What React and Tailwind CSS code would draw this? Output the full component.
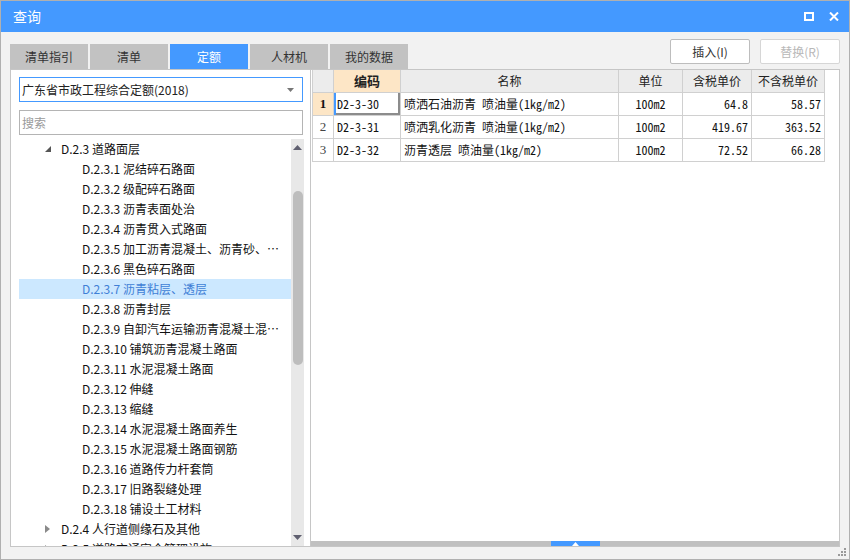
import React from 'react';

const TABS = ['清单指引', '清单', '定额', '人材机', '我的数据'];
const ACTIVE_TAB = 2;

const TREE = [
  { level: 2, label: 'D.2.3 道路面层', toggle: 'open' },
  { level: 3, label: 'D.2.3.1 泥结碎石路面' },
  { level: 3, label: 'D.2.3.2 级配碎石路面' },
  { level: 3, label: 'D.2.3.3 沥青表面处治' },
  { level: 3, label: 'D.2.3.4 沥青贯入式路面' },
  { level: 3, label: 'D.2.3.5 加工沥青混凝土、沥青砂、沥青混合料' },
  { level: 3, label: 'D.2.3.6 黑色碎石路面' },
  { level: 3, label: 'D.2.3.7 沥青粘层、透层', selected: true },
  { level: 3, label: 'D.2.3.8 沥青封层' },
  { level: 3, label: 'D.2.3.9 自卸汽车运输沥青混凝土混合料' },
  { level: 3, label: 'D.2.3.10 铺筑沥青混凝土路面' },
  { level: 3, label: 'D.2.3.11 水泥混凝土路面' },
  { level: 3, label: 'D.2.3.12 伸缝' },
  { level: 3, label: 'D.2.3.13 缩缝' },
  { level: 3, label: 'D.2.3.14 水泥混凝土路面养生' },
  { level: 3, label: 'D.2.3.15 水泥混凝土路面钢筋' },
  { level: 3, label: 'D.2.3.16 道路传力杆套筒' },
  { level: 3, label: 'D.2.3.17 旧路裂缝处理' },
  { level: 3, label: 'D.2.3.18 铺设土工材料' },
  { level: 2, label: 'D.2.4 人行道侧缘石及其他', toggle: 'closed' },
  { level: 2, label: 'D.2.5 道路交通安全管理设施', toggle: 'closed' },
];

const ROWS = [
  { code: 'D2-3-30', name: '喷洒石油沥青 喷油量(1kg/m2)', unit: '100m2', taxed: '64.8', untaxed: '58.57' },
  { code: 'D2-3-31', name: '喷洒乳化沥青 喷油量(1kg/m2)', unit: '100m2', taxed: '419.67', untaxed: '363.52' },
  { code: 'D2-3-32', name: '沥青透层 喷油量(1kg/m2)', unit: '100m2', taxed: '72.52', untaxed: '66.28' },
];

const TitleBar = () => (
  <div className="h-[31px] bg-[#4499ff] flex items-center justify-between pl-[12px] pr-[10px] text-white">
    <span className="text-[14px]">查询</span>
    <div className="flex items-center gap-[15px]">
      <svg width="10" height="9" viewBox="0 0 10 9">
        <rect x="1" y="1" width="8" height="7" fill="none" stroke="#fff" strokeWidth="2" />
      </svg>
      <svg width="10" height="9" viewBox="0 0 10 9">
        <path d="M1 0.5 L9 8.5 M9 0.5 L1 8.5" stroke="#fff" strokeWidth="2" />
      </svg>
    </div>
  </div>
);

const TabBar = () => (
  <div className="h-[37px] flex justify-between px-[9px]">
    <div className="flex items-end gap-[2px]">
      {TABS.map((tab, i) => (
        <div
          key={tab}
          className={
            i === ACTIVE_TAB
              ? 'w-[78px] h-[25px] flex items-center justify-center text-[12px] bg-[#4499ff] text-white'
              : 'w-[78px] h-[25px] flex items-center justify-center text-[12px] bg-[#c2c2c2] text-[#333]'
          }
        >
          {tab}
        </div>
      ))}
    </div>
    <div className="flex gap-[10px] pt-[7px]">
      <button
        type="button"
        className="w-[80px] h-[25px] bg-white border border-[#bdbdbd] rounded-[2px] text-[12px] text-[#333]"
      >
        插入(I)
      </button>
      <button
        type="button"
        className="w-[80px] h-[25px] bg-white border border-[#d6d6d6] rounded-[2px] text-[12px] text-[#b8b8b8]"
      >
        替换(R)
      </button>
    </div>
  </div>
);

const TreeRow = ({ item }) => {
  const indent = item.level === 2 ? 'pl-[26px]' : 'pl-[63px]';
  return (
    <div
      className={`h-[20px] flex items-center ${indent} ${item.selected ? 'bg-[#cce8ff] text-[#3f7fd6]' : 'text-[#111]'}`}
    >
      {item.toggle && (
        <span className="w-[16px] flex items-center">
          {item.toggle === 'open' ? (
            <svg width="6" height="6" viewBox="0 0 6 6">
              <path d="M6 0 L6 6 L0 6 Z" fill="#555" />
            </svg>
          ) : (
            <svg width="5" height="8" viewBox="0 0 5 8">
              <path d="M0 0 L5 4 L0 8 Z" fill="#8a8a8a" />
            </svg>
          )}
        </span>
      )}
      <span className="truncate pr-[8px] text-[12px] leading-[20px]">{item.label}</span>
    </div>
  );
};

const VScrollbar = () => (
  <div className="w-[13px] bg-[#e8e8e8] flex flex-col items-center">
    <div className="h-[11px] flex items-end justify-center">
      <svg width="9" height="5" viewBox="0 0 9 5">
        <path d="M4.5 0 L9 5 L0 5 Z" fill="#606070" />
      </svg>
    </div>
    <div className="mt-[41px] w-[10px] h-[174px] rounded-full bg-[#bdbdbd]" />
    <div className="flex-1" />
    <div className="h-[11px] flex items-start justify-center">
      <svg width="9" height="5" viewBox="0 0 9 5">
        <path d="M0 0 L9 0 L4.5 5 Z" fill="#606070" />
      </svg>
    </div>
  </div>
);

const LeftPanel = () => (
  <div className="w-[301px] bg-white border border-[#c6c6c6] flex flex-col pt-[7px] pl-[8px] pr-[6px]">
    <div className="h-[25px] border border-[#4499ff] flex items-center justify-between pl-[2px] pr-[8px] mr-[1px]">
      <span className="text-[12px] text-[#222]">广东省市政工程综合定额(2018)</span>
      <svg width="7" height="4" viewBox="0 0 7 4">
        <path d="M0 0 L7 0 L3.5 4 Z" fill="#777" />
      </svg>
    </div>
    <div className="mt-[8px] h-[25px] border border-[#b4b4b4] flex items-center pl-[2px] mr-[1px]">
      <span className="text-[12px] text-[#9a9a9a]">搜索</span>
    </div>
    <div className="mt-[4px] flex-1 flex min-h-0 overflow-hidden">
      <div className="flex-1 min-w-0 overflow-hidden">
        {TREE.map((item) => (
          <TreeRow key={item.label} item={item} />
        ))}
      </div>
      <VScrollbar />
    </div>
  </div>
);

const cell = 'border border-[#d0d0d0] px-[3px] py-0';

const RightPanel = () => (
  <div className="flex-1 bg-white border border-[#c6c6c6] border-l-0 flex flex-col">
    <div className="flex-1 pl-[1px] overflow-hidden">
      <table className="-mt-[1px] border-collapse table-fixed font-['Noto_Sans_Mono_CJK_SC','Liberation_Mono','Noto_Sans_CJK_SC',monospace] text-[12px] text-[#111]">
        <colgroup>
          <col className="w-[21px]" />
          <col className="w-[67px]" />
          <col className="w-[218px]" />
          <col className="w-[64px]" />
          <col className="w-[69px]" />
          <col className="w-[73px]" />
        </colgroup>
        <thead>
          <tr className="h-[23px] font-['Noto_Sans_CJK_SC',sans-serif] text-[12px] text-[#222]">
            <th className={`${cell} bg-[#ececec] font-normal`} />
            <th className={`${cell} bg-[#fde6c6] font-bold text-[13px]`}>编码</th>
            <th className={`${cell} bg-[#ececec] font-normal`}>名称</th>
            <th className={`${cell} bg-[#ececec] font-normal`}>单位</th>
            <th className={`${cell} bg-[#ececec] font-normal`}>含税单价</th>
            <th className={`${cell} bg-[#ececec] font-normal`}>不含税单价</th>
          </tr>
        </thead>
        <tbody>
          {ROWS.map((row, i) => (
            <tr key={row.code} className="h-[23px]">
              <td
                className={
                  i === 0
                    ? `${cell} bg-[#fde6c6] text-center font-bold text-[13px] font-['Liberation_Serif',serif]`
                    : `${cell} text-center text-[13px] text-[#444] font-['Liberation_Serif',serif]`
                }
              >
                {i + 1}
              </td>
              <td
                className={
                  i === 0
                    ? `${cell} whitespace-nowrap shadow-[inset_2px_0_0_#4499ff,inset_-2px_-2px_0_#8c8c8c]`
                    : `${cell} whitespace-nowrap`
                }
              >
                {row.code}
              </td>
              <td className={`${cell} whitespace-nowrap px-[2px]`}>{row.name}</td>
              <td className={`${cell} text-center`}>{row.unit}</td>
              <td className={`${cell} text-right`}>{row.taxed}</td>
              <td className={`${cell} text-right`}>{row.untaxed}</td>
            </tr>
          ))}
        </tbody>
      </table>
    </div>
    <div className="h-[5px] bg-[#c0c0c0] flex justify-center">
      <div className="w-[49px] h-[5px] bg-[#4499ff] flex items-end justify-center">
        <svg width="7" height="4" viewBox="0 0 7 4">
          <path d="M3.5 0 L7 4 L0 4 Z" fill="#fff" />
        </svg>
      </div>
    </div>
  </div>
);

const App = () => (
  <div className="relative w-[850px] h-[560px] bg-[#f2f2f2] border border-[#b0b0b0] flex flex-col font-['Noto_Sans_CJK_SC',sans-serif] overflow-hidden">
    <TitleBar />
    <TabBar />
    <div className="flex-1 flex pl-[9px] pr-[9px] pb-[12px] min-h-0">
      <LeftPanel />
      <RightPanel />
    </div>
    <svg className="absolute right-[2px] bottom-[2px]" width="9" height="9" viewBox="0 0 9 9">
      <rect x="6" y="0" width="2" height="2" fill="#9a9a9a" />
      <rect x="3" y="3" width="2" height="2" fill="#9a9a9a" />
      <rect x="6" y="3" width="2" height="2" fill="#9a9a9a" />
      <rect x="0" y="6" width="2" height="2" fill="#9a9a9a" />
      <rect x="3" y="6" width="2" height="2" fill="#9a9a9a" />
      <rect x="6" y="6" width="2" height="2" fill="#9a9a9a" />
    </svg>
  </div>
);

export default App;
